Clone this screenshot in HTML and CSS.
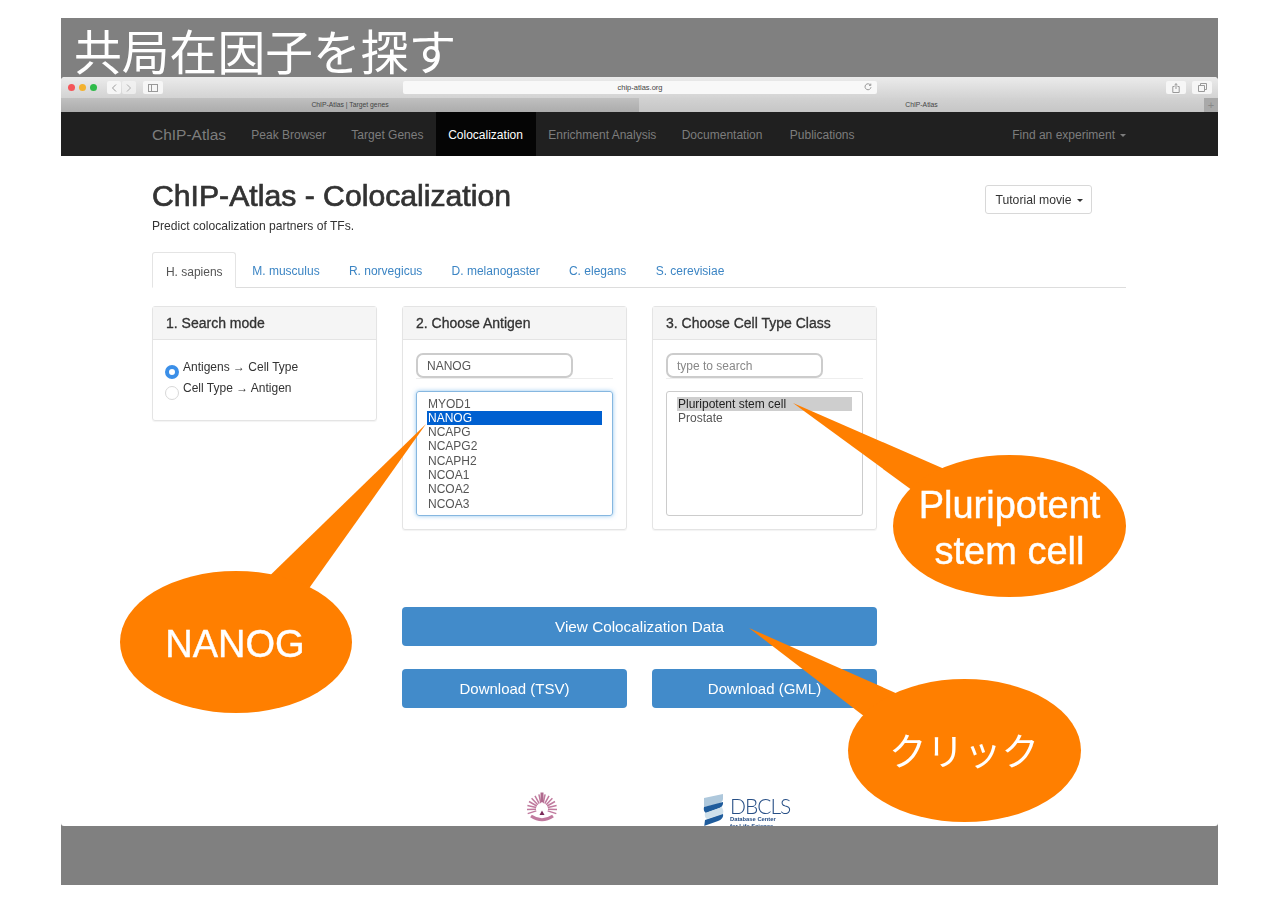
FILE: index.html
```html
<!DOCTYPE html>
<html lang="ja">
<head>
<meta charset="utf-8">
<title>共局在因子を探す</title>
<link rel="stylesheet" href="styles.css">
</head>
<body>
<div class="slide">
  <div class="slide-title">共局在因子を探す</div>
  <div class="window">
    <div class="toolbar">
      <div class="lights"><i class="light red"></i><i class="light yellow"></i><i class="light green"></i></div>
      <div class="tool-group">
        <span class="tool-btn"><svg width="6" height="8" viewBox="0 0 6 8"><path d="M5 0.5 L1.5 4 L5 7.5" class="tool-stroke"/></svg></span>
        <span class="tool-btn dim"><svg width="6" height="8" viewBox="0 0 6 8"><path d="M1 0.5 L4.5 4 L1 7.5" class="tool-stroke"/></svg></span>
      </div>
      <span class="tool-btn wide"><svg width="10" height="8" viewBox="0 0 10 8"><rect x="0.5" y="0.5" width="9" height="7" class="tool-stroke"/><path d="M3.500 0.5 V7.5" class="tool-stroke"/></svg></span>
      <div class="url-bar"><span class="url-text">chip-atlas.org</span><svg class="reload" width="8" height="8" viewBox="0 0 8 8"><path d="M6.6 2.2 A3 3 0 1 0 7 4.2 M6.8 0.6 V2.4 H5" class="tool-stroke"/></svg></div>
      <div class="tool-right">
        <span class="tool-btn wide"><svg width="8" height="10" viewBox="0 0 8 10"><path d="M2.5 3.5 H0.8 V9.5 H7.2 V3.5 H5.5 M4 6 V0.7 M2.5 2 L4 0.7 L5.5 2" class="tool-stroke"/></svg></span>
        <span class="tool-btn wide"><svg width="9" height="9" viewBox="0 0 9 9"><path d="M2.5 2.5 V0.5 H8.5 V6.5 H6.5 M0.5 2.5 H6.5 V8.5 H0.5 Z" class="tool-stroke"/></svg></span>
      </div>
    </div>
    <div class="tabbar">
      <div class="browser-tab">ChIP-Atlas | Target genes</div>
      <div class="browser-tab current">ChIP-Atlas</div>
      <div class="tab-plus">+</div>
    </div>
    <nav class="navbar">
      <span class="brand">ChIP-Atlas</span>
      <span class="nav-item">Peak Browser</span>
      <span class="nav-item">Target Genes</span>
      <span class="nav-item active">Colocalization</span>
      <span class="nav-item">Enrichment Analysis</span>
      <span class="nav-item">Documentation</span>
      <span class="nav-item last">Publications</span>
      <span class="nav-item right">Find an experiment<i class="caret nav-caret"></i></span>
    </nav>
    <main class="content">
      <div class="head-row">
        <div>
          <h1 class="page-title">ChIP-Atlas - Colocalization</h1>
          <p class="lead">Predict colocalization partners of TFs.</p>
        </div>
        <button class="tutorial">Tutorial movie<i class="caret"></i></button>
      </div>
      <div class="species-tabs">
        <span class="species active">H. sapiens</span>
        <span class="species">M. musculus</span>
        <span class="species">R. norvegicus</span>
        <span class="species">D. melanogaster</span>
        <span class="species">C. elegans</span>
        <span class="species">S. cerevisiae</span>
      </div>
      <div class="panels">
        <section class="panel short">
          <div class="panel-head">1. Search mode</div>
          <div class="panel-body radios">
            <label class="radio-row"><i class="radio on"></i><span>Antigens → Cell Type</span></label>
            <label class="radio-row"><i class="radio"></i><span>Cell Type → Antigen</span></label>
          </div>
        </section>
        <section class="panel">
          <div class="panel-head">2. Choose Antigen</div>
          <div class="panel-body">
            <div class="search-wrap"><div class="search">NANOG</div></div>
            <div class="listbox focus">
              <div class="opt">MYOD1</div>
              <div class="opt selected">NANOG</div>
              <div class="opt">NCAPG</div>
              <div class="opt">NCAPG2</div>
              <div class="opt">NCAPH2</div>
              <div class="opt">NCOA1</div>
              <div class="opt">NCOA2</div>
              <div class="opt">NCOA3</div>
            </div>
          </div>
        </section>
        <section class="panel">
          <div class="panel-head">3. Choose Cell Type Class</div>
          <div class="panel-body">
            <div class="search-wrap"><div class="search placeholder">type to search</div></div>
            <div class="listbox">
              <div class="opt muted-selected">Pluripotent stem cell</div>
              <div class="opt">Prostate</div>
            </div>
          </div>
        </section>
      </div>
      <div class="actions">
        <button class="btn full">View Colocalization Data</button>
        <button class="btn">Download (TSV)</button>
        <button class="btn">Download (GML)</button>
      </div>
      <div class="logos">
        <svg class="logo-kyoto" width="32" height="31" viewBox="0 0 32 31">
          <path class="crest-rays" d="M19.1 2.3 L17.2 11.1 M12.9 2.3 L14.8 11.1 M23 3.8 L18.8 11.7 M9 3.8 L13.2 11.7 M26.4 6.2 L20.2 12.700 M5.600 6.2 L11.8 12.7 M29 9.500 L21.2 14 M3 9.500 L10.800 14 M30.600 13.400 L21.800 15.500 M1.400 13.400 L10.200 15.500 M31 17.500 L22 17.200 M1 17.500 L10 17.200 M30.300 21.600 L21.700 18.900 M1.700 21.600 L10.300 18.900"/>
          <path class="crest-ring" d="M5 24 Q16 31.500 27 24"/>
          <path class="crest-top" d="M14.500 0.500 H17.500 V10 H14.500 Z"/>
          <path class="crest-dot" d="M16 18.500 L18.500 23 H13.500 Z"/>
        </svg>
        <div class="dbcls">
          <svg class="helix" width="21" height="34" viewBox="0 0 21 34">
            <path class="h-pale" d="M1 4 L20 0 L20 5 Q20 9 11 11 L1 13 Z"/>
            <path class="h-dark" d="M1 13 L20 8 Q21 13 14 15 L3 19 Q0 17 1 13 Z"/>
            <path class="h-mid" d="M2 19 L19 13 Q21 17 20 20 L4 25 Q1 23 2 19 Z"/>
            <path class="h-dark" d="M2 26 L20 20 Q21 25 15 27 L1 32 L1 34 H21 V34 H1 Z"/>
          </svg>
          <div class="dbcls-text">
            <div class="dbcls-name">DBCLS</div>
            <div class="dbcls-sub">Database Center<br>for Life Science</div>
          </div>
        </div>
      </div>
    </main>
  </div>
  <svg class="callouts" width="1157" height="867" viewBox="61 18 1157 867">
    <path class="bubble" d="M426 424 L255 590 L300 601 Z"/>
    <ellipse class="bubble" cx="236" cy="642" rx="116" ry="71"/>
    <path class="bubble" d="M793 403 L965 478 L931 504 Z"/>
    <ellipse class="bubble" cx="1009.500" cy="526" rx="116.500" ry="71"/>
    <path class="bubble" d="M749 628 L925 706 L890 736 Z"/>
    <ellipse class="bubble" cx="964.500" cy="750.500" rx="116.500" ry="71.500"/>
    <text class="bubble-text" x="235" y="657">NANOG</text>
    <text class="bubble-text" x="1009.500" y="518">Pluripotent</text>
    <text class="bubble-text" x="1009.500" y="564">stem cell</text>
    <text class="bubble-text jp" x="964" y="765">クリック</text>
  </svg>
</div>
</body>
</html>
```
FILE: styles.css
```css
* { box-sizing: border-box; }
html, body { margin: 0; padding: 0; background: #fff; }
body {
  height: 904px;
  padding: 18px 62px 0 61px;
  font-family: "Liberation Sans", Arial, sans-serif;
  color: #333;
  overflow: hidden;
}
.slide {
  position: relative;
  height: 867px;
  background: #808080;
  display: flex;
  flex-direction: column;
  filter: blur(.4px);
}
.slide-title {
  height: 59px;
  padding-left: 13px;
  font-family: "Noto Sans CJK JP", sans-serif;
  font-weight: 400;
  font-size: 47.800px;
  line-height: 64px;
  color: #fff;
  white-space: nowrap;
  overflow: visible;
}
.window {
  height: 749px;
  background: #fff;
  border-radius: 4px 4px 3px 3px;
  overflow: hidden;
  display: flex;
  flex-direction: column;
}
.toolbar {
  height: 21px;
  flex: none;
  display: flex;
  align-items: center;
  padding: 0 6px 0 7px;
  background: linear-gradient(#ebebeb, #d3d3d3);
}
.lights { display: flex; gap: 4px; width: 39px; }
.light { width: 7px; height: 7px; border-radius: 50%; display: block; }
.red { background: #f4565a; }
.yellow { background: #f3b22f; }
.green { background: #2fbb4a; }
.tool-group { display: flex; gap: 1px; margin-right: 7px; }
.tool-btn {
  width: 14px;
  height: 13px;
  background: #f6f6f6;
  border-radius: 2px;
  display: flex;
  align-items: center;
  justify-content: center;
}
.tool-btn.wide { width: 20px; }
.tool-btn.dim { opacity: .7; }
.tool-stroke { fill: none; stroke: #999; stroke-width: 1; }
.url-bar {
  position: relative;
  width: 474px;
  height: 13px;
  margin-left: 240px;
  background: #f8f8f8;
  border-radius: 2px;
  text-align: center;
  font-size: 7.500px;
  line-height: 13px;
  color: #444;
}
.reload { position: absolute; right: 5px; top: 2px; }
.tool-right { margin-left: auto; display: flex; gap: 6px; }
.tabbar {
  height: 14px;
  flex: none;
  display: flex;
  background: linear-gradient(#c0c0c0, #acacac);
}
.browser-tab {
  flex: 0 0 578px;
  text-align: center;
  font-size: 6.800px;
  line-height: 14px;
  color: #444;
}
.browser-tab.current {
  flex: 0 0 565px;
  background: linear-gradient(#d2d2d2, #c6c6c6);
}
.tab-plus {
  flex: 1;
  background: #a9a9a9;
  color: #888;
  font-size: 11px;
  line-height: 14px;
  text-align: center;
}
.navbar {
  height: 44px;
  flex: none;
  display: flex;
  align-items: stretch;
  padding: 0 91px 0 91px;
  background: #202020;
  color: #7d7d7d;
  font-size: 12px;
  line-height: 46px;
}
.brand { font-size: 15.500px; margin-right: 12.500px; }
.nav-item { padding: 0 12.700px; white-space: nowrap; }
.nav-item.active { background: #050505; color: #fff; margin-left: -.6px; }
.nav-item.last { margin-left: 2px; }
.nav-item.right { margin-left: auto; padding: 0 1px 0 0; }
.caret {
  display: inline-block;
  margin-left: 5px;
  vertical-align: middle;
  border-top: 3px solid #333;
  border-left: 3px solid transparent;
  border-right: 3px solid transparent;
}
.nav-caret { border-top-color: #7d7d7d; }
.content {
  position: relative;
  flex: 1;
  padding: 0 92px 0 91px;
}
.head-row {
  display: flex;
  justify-content: space-between;
  align-items: flex-start;
  height: 96px;
}
.page-title {
  margin: 22px 0 0;
  font-size: 30.200px;
  line-height: 36px;
  font-weight: 400;
  color: #333;
  -webkit-text-stroke: .7px #333;
}
.lead { margin: 5px 0 0; font-size: 12.100px; line-height: 14px; color: #333; }
.tutorial {
  margin: 29px 34px 0 0;
  width: 107px;
  height: 29px;
  padding: 0 0 0 1px;
  background: #fff;
  border: 1px solid #d8d8d8;
  border-radius: 3px;
  font: 12.200px "Liberation Sans", Arial, sans-serif;
  color: #333;
}
.species-tabs {
  height: 36px;
  display: flex;
  gap: 2.300px;
  border-bottom: 1px solid #ddd;
  font-size: 12px;
  line-height: 38px;
  color: #3c85c4;
  white-space: nowrap;
}
.species { padding: 0 13.500px; }
.species.active {
  height: 36px;
  padding: 0 12.900px;
  background: #fff;
  color: #555;
  border: 1px solid #e4e4e4;
  border-bottom-color: #fff;
  border-radius: 3px 3px 0 0;
}
.panels {
  display: flex;
  gap: 25px;
  margin-top: 18px;
  align-items: flex-start;
}
.panel {
  width: 225px;
  height: 224px;
  border: 1px solid #e4e4e4;
  border-radius: 3px;
  box-shadow: 0 1px 1px rgba(0,0,0,.05);
}
.panel.short { height: 115px; }
.panel-head {
  height: 33px;
  padding-left: 13px;
  background: #f5f5f5;
  border-bottom: 1px solid #e4e4e4;
  font-size: 14px;
  line-height: 33px;
  color: #333;
  -webkit-text-stroke: .3px #333;
}
.panel-body { padding: 13px 13px 0; }
.radios { padding: 18px 12px 0; }
.radio-row {
  display: flex;
  gap: 4px;
  height: 21px;
  font-size: 12px;
  line-height: 18px;
  white-space: nowrap;
}
.radio {
  flex: none;
  width: 14px;
  height: 14px;
  margin-top: 7px;
  border: 1px solid #d8d8d8;
  border-radius: 50%;
  background: #fff;
}
.radio.on { border: 4.500px solid #3b8fe8; }
.search-wrap { height: 26px; border-bottom: 1px solid #eee; }
.search {
  width: 157px;
  height: 25px;
  padding-left: 9px;
  border: 2px solid #ccc;
  border-radius: 7px;
  font-size: 12px;
  line-height: 22px;
  color: #555;
}
.search.placeholder { color: #888; }
.listbox {
  height: 125px;
  margin-top: 12px;
  padding: 4.500px 10px 0 10px;
  border: 1px solid #ccc;
  border-radius: 3px;
  font-size: 12px;
  line-height: 14.300px;
  color: #555;
}
.listbox.focus {
  border-color: #86b7e0;
  box-shadow: 0 0 4px rgba(102,175,233,.7);
}
.opt { white-space: nowrap; padding-left: 1px; }
.opt.selected { background: #0060d0; color: #fff; }
.opt.muted-selected { background: #cecece; color: #222; }
.actions {
  display: grid;
  grid-template-columns: 225px 225px;
  grid-auto-rows: 39px;
  gap: 23px 25px;
  margin: 77px 0 0 250px;
  width: 475px;
}
.btn {
  padding: 0;
  border: 0;
  border-radius: 4px;
  background: #428bca;
  color: #fff;
  font: 15px "Liberation Sans", Arial, sans-serif;
}
.btn.full { grid-column: 1 / 3; font-size: 15.300px; }
.logos {
  display: flex;
  align-items: flex-start;
  margin: 84px 0 0 374px;
  gap: 145px;
}
.crest-rays { fill: none; stroke: #c07a9e; stroke-width: 1.500; }
.crest-ring { fill: none; stroke: #c07a9e; stroke-width: 3; }
.crest-top { fill: #b06a8e; }
.crest-dot { fill: #7a2a58; }
.logo-kyoto { flex: none; }
.dbcls { display: flex; gap: 6px; margin-top: 2px; }
.helix { flex: none; }
.h-pale { fill: #aec8dc; }
.h-mid { fill: #cfe0ea; }
.h-dark { fill: #1f5c9c; }
.dbcls-text { padding-top: 1px; }
.dbcls-name {
  font-family: Lato, "Liberation Sans", sans-serif;
  font-weight: 300;
  font-size: 21px;
  line-height: 21px;
  letter-spacing: -1px;
  color: #274f86;
}
.dbcls-sub { font-size: 5.800px; line-height: 7px; font-weight: 700; color: #274f86; }
.callouts {
  position: absolute;
  left: 0;
  top: 0;
  pointer-events: none;
}
.bubble { fill: #ff7f00; }
.bubble-text {
  fill: #fff;
  stroke: #fff;
  stroke-width: .4px;
  font-family: "Liberation Sans", Arial, sans-serif;
  font-size: 38px;
  text-anchor: middle;
}
.bubble-text.jp {
  font-family: "Noto Sans CJK JP", sans-serif;
  font-weight: 400;
  stroke-width: 0;
  font-size: 37.500px;
}
```
